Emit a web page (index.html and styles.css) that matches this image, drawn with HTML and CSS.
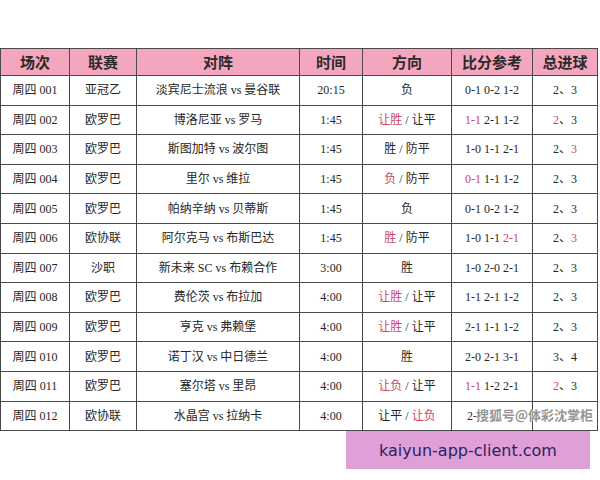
FILE: index.html
```html
<!DOCTYPE html>
<html lang="zh">
<head>
<meta charset="utf-8">
<link rel="stylesheet" href="styles.css">
</head>
<body>
<div class="page">
  <table class="sched">
    <colgroup>
      <col class="c1"><col class="c2"><col class="c3"><col class="c4"><col class="c5"><col class="c6"><col class="c7">
    </colgroup>
    <thead>
      <tr><th>场次</th><th>联赛</th><th>对阵</th><th>时间</th><th>方向</th><th>比分参考</th><th>总进球</th></tr>
    </thead>
    <tbody>
      <tr><td>周四 001</td><td>亚冠乙</td><td>淡宾尼士流浪 vs 曼谷联</td><td>20:15</td><td>负</td><td>0-1 0-2 1-2</td><td>2、3</td></tr>
      <tr><td>周四 002</td><td>欧罗巴</td><td>博洛尼亚 vs 罗马</td><td>1:45</td><td><span class="r">让胜</span> / 让平</td><td><span class="r">1-1</span> 2-1 1-2</td><td><span class="r">2</span>、3</td></tr>
      <tr><td>周四 003</td><td>欧罗巴</td><td>斯图加特 vs 波尔图</td><td>1:45</td><td>胜 / 防平</td><td>1-0 1-1 2-1</td><td>2、<span class="r">3</span></td></tr>
      <tr><td>周四 004</td><td>欧罗巴</td><td>里尔 vs 维拉</td><td>1:45</td><td><span class="r">负</span> / 防平</td><td><span class="r">0-1</span> 1-1 1-2</td><td>2、3</td></tr>
      <tr><td>周四 005</td><td>欧罗巴</td><td>帕纳辛纳 vs 贝蒂斯</td><td>1:45</td><td>负</td><td>0-1 0-2 1-2</td><td>2、3</td></tr>
      <tr><td>周四 006</td><td>欧协联</td><td>阿尔克马 vs 布斯巴达</td><td>1:45</td><td><span class="r">胜</span> / 防平</td><td>1-0 1-1 <span class="r">2-1</span></td><td>2、<span class="r">3</span></td></tr>
      <tr><td>周四 007</td><td>沙职</td><td>新未来 SC vs 布赖合作</td><td>3:00</td><td>胜</td><td>1-0 2-0 2-1</td><td>2、3</td></tr>
      <tr><td>周四 008</td><td>欧罗巴</td><td>费伦茨 vs 布拉加</td><td>4:00</td><td><span class="r">让胜</span> / 让平</td><td>1-1 2-1 1-2</td><td>2、3</td></tr>
      <tr><td>周四 009</td><td>欧罗巴</td><td>亨克 vs 弗赖堡</td><td>4:00</td><td><span class="r">让胜</span> / 让平</td><td>2-1 1-1 1-2</td><td>2、3</td></tr>
      <tr><td>周四 010</td><td>欧罗巴</td><td>诺丁汉 vs 中日德兰</td><td>4:00</td><td>胜</td><td>2-0 2-1 3-1</td><td>3、4</td></tr>
      <tr><td>周四 011</td><td>欧罗巴</td><td>塞尔塔 vs 里昂</td><td>4:00</td><td><span class="r">让负</span> / 让平</td><td><span class="r">1-1</span> 1-2 2-1</td><td><span class="r">2</span>、3</td></tr>
      <tr><td>周四 012</td><td>欧协联</td><td>水晶宫 vs 拉纳卡</td><td>4:00</td><td>让平 / <span class="r">让负</span></td><td class="left">2-</td><td></td></tr>
    </tbody>
  </table>
  <div class="sohu">搜狐号@体彩沈掌柜</div>
  <div class="stamp">kaiyun-app-client.com</div>
</div>
</body>
</html>
```

FILE: styles.css
```css
html, body {
  margin: 0;
  padding: 0;
  background: #ffffff;
}
.page {
  position: relative;
  width: 600px;
  height: 480px;
  padding-top: 48px;
  box-sizing: border-box;
}
.sched {
  border-collapse: collapse;
  width: 597px;
  table-layout: fixed;
  font-family: "Liberation Serif", "Noto Sans CJK SC", serif;
  font-size: 12px;
  color: #262626;
}
.c1 { width: 69px; }
.c2 { width: 67px; }
.c3 { width: 163px; }
.c4 { width: 63px; }
.c5 { width: 89px; }
.c6 { width: 81px; }
.c7 { width: 65px; }
.sched th, .sched td {
  border: 1px solid #4a4a4a;
  text-align: center;
  padding: 0;
  white-space: nowrap;
  overflow: hidden;
}
.sched th {
  background: #f3a6be;
  height: 26px;
  font-family: "Noto Sans CJK SC", sans-serif;
  font-weight: 700;
  font-size: 15px;
  color: #2a2a2a;
  line-height: 20px;
}
.sched td {
  height: 28.6px;
  line-height: 16px;
}
.sched td.left {
  text-align: left;
  padding-left: 15px;
}
.r { color: #c9475f; }
.sohu {
  position: absolute;
  left: 476px;
  top: 406px;
  font-family: "Noto Sans CJK SC", sans-serif;
  font-size: 13px;
  font-weight: 700;
  line-height: 18px;
  color: rgba(120, 120, 120, 0.8);
  text-shadow: 0 0 1px #fff, 0 0 2px #fff;
}
.stamp {
  position: absolute;
  left: 346px;
  top: 431px;
  width: 244px;
  height: 38px;
  background: #df9fd7;
  color: #2c2260;
  font-family: "DejaVu Sans", sans-serif;
  font-size: 16px;
  display: flex;
  align-items: center;
  justify-content: center;
}
```
